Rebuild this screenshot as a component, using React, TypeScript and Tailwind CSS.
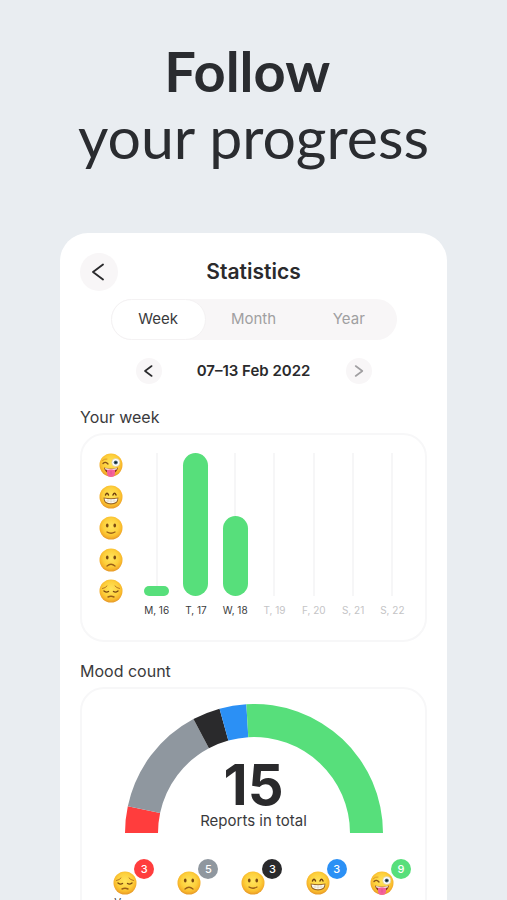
import { useState } from "react";

type Mood = "awful" | "bad" | "okay" | "good" | "great";

const moodScale: Mood[] = ["great", "good", "okay", "bad", "awful"];

const periods = ["Week", "Month", "Year"];

const days = [
    { label: "M, 16", value: 7 },
    { label: "T, 17", value: 100 },
    { label: "W, 18", value: 56 },
    { label: "T, 19", value: 0 },
    { label: "F, 20", value: 0 },
    { label: "S, 21", value: 0 },
    { label: "S, 22", value: 0 },
];

const moodCounts: { mood: Mood; label: string; count: number; badge: string }[] = [
    { mood: "awful", label: "Very bad", count: 3, badge: "bg-[#ff3d3d]" },
    { mood: "bad", label: "Bad", count: 5, badge: "bg-[#8f979f]" },
    { mood: "okay", label: "Okay", count: 3, badge: "bg-[#2a2a2c]" },
    { mood: "good", label: "Good", count: 3, badge: "bg-[#2b90f5]" },
    { mood: "great", label: "Great", count: 9, badge: "bg-[#57df7b]" },
];

// Angles in degrees, clockwise from the left end of the half circle
const gaugeSegments = [
    { from: 0, to: 12, color: "#ff3d3d" },
    { from: 12, to: 62, color: "#8f979f" },
    { from: 62, to: 74.5, color: "#2a2a2c" },
    { from: 74.5, to: 86.6, color: "#2b90f5" },
    { from: 86.6, to: 180, color: "#57df7b" },
];

function point(radius: number, angle: number) {
    const rad = (angle * Math.PI) / 180;
    return `${129 - radius * Math.cos(rad)} ${129 - radius * Math.sin(rad)}`;
}

function Chevron({ size, flip = false }: { size: number; flip?: boolean }) {
    return (
        <svg
            width={size}
            height={size}
            viewBox="0 0 18 18"
            fill="none"
            stroke="currentColor"
            strokeWidth={size > 14 ? 1.9 : 2.4}
            strokeLinecap="round"
            strokeLinejoin="round"
            aria-hidden="true"
        >
            <path d={flip ? "M4 1.500 14 9 4 16.500" : "M13 1.500 3 9l10 7.500"} />
        </svg>
    );
}

function MoodIcon({ mood }: { mood: Mood }) {
    return (
        <svg viewBox="0 0 48 48" className="size-6 shrink-0" role="img" aria-label={mood}>
            <defs>
                <radialGradient id="face" cx="50%" cy="42%" r="56%">
                    <stop offset="0" stopColor="#ffe45c" />
                    <stop offset="0.6" stopColor="#fdd03c" />
                    <stop offset="0.85" stopColor="#f8b72b" />
                    <stop offset="1" stopColor="#e89d2a" />
                </radialGradient>
            </defs>
            <circle cx="24" cy="24" r="23" fill="url(#face)" />
            {mood === "great" && (
                <>
                    <path d="M8 21q5-5 10 1" fill="none" stroke="#8a5418" strokeWidth="2.600" strokeLinecap="round" />
                    <path d="M7 15q4-4 9-3" fill="none" stroke="#d08c22" strokeWidth="1.600" strokeLinecap="round" />
                    <circle cx="33.500" cy="19" r="8" fill="#fff" stroke="#d6c6a0" strokeWidth="1.200" />
                    <circle cx="33.500" cy="19" r="4.200" fill="#4d7080" />
                    <circle cx="33.500" cy="19" r="2.200" fill="#101820" />
                    <path d="M10 29q14 5 28 0-2 12-14 12T10 29z" fill="#8a3a20" />
                    <path d="M12 30q12 4 24 0l-1 3q-11 3-22 0z" fill="#fff" />
                    <path d="M16 34q8-3 16 0v6q0 8-8 8t-8-8z" fill="#f4629b" />
                    <path d="M24 36v7" stroke="#d9508a" strokeWidth="1.500" />
                </>
            )}
            {mood === "good" && (
                <>
                    <path d="M13 20q3-7 6 0M28 20q3-7 6 0" fill="none" stroke="#70400f" strokeWidth="3" strokeLinecap="round" />
                    <path d="M9 25q15 3 30 0 0 14-15 14T9 25z" fill="#9a6424" />
                    <path d="M11 27q13 3 26 0-.5 9.500-13 9.500T11 27z" fill="#fffdf5" />
                    <path d="M12 31.500q12 2 24 0M18 28v7M24 28.500v8M30 28v7" fill="none" stroke="#cfc4ac" strokeWidth="1" />
                </>
            )}
            {mood === "okay" && (
                <>
                    <ellipse cx="16.500" cy="19" rx="2.600" ry="4" fill="#7a4912" />
                    <ellipse cx="31.500" cy="19" rx="2.600" ry="4" fill="#7a4912" />
                    <path d="M16 32q8 5 16 0" fill="none" stroke="#9a5f18" strokeWidth="2.600" strokeLinecap="round" />
                </>
            )}
            {mood === "bad" && (
                <>
                    <ellipse cx="16.500" cy="19" rx="2.600" ry="4" fill="#7a4912" />
                    <ellipse cx="31.500" cy="19" rx="2.600" ry="4" fill="#7a4912" />
                    <path d="M16 36q8-7 16 0" fill="none" stroke="#9a5f18" strokeWidth="2.600" strokeLinecap="round" />
                </>
            )}
            {mood === "awful" && (
                <>
                    <path d="M7 19q6-1 9-5M41 19q-6-1-9-5" fill="none" stroke="#b57420" strokeWidth="2" strokeLinecap="round" />
                    <path d="M10 24q5 4 9 1M38 24q-5 4-9 1" fill="none" stroke="#7a4912" strokeWidth="2.800" strokeLinecap="round" />
                    <path d="M18 36q6-3 12 0" fill="none" stroke="#9a5f18" strokeWidth="2.800" strokeLinecap="round" />
                </>
            )}
        </svg>
    );
}

function WeekChart() {
    return (
        <div className="flex rounded-3xl border-2 border-[#f7f7f8] pt-[18px] pr-[13px] pb-[22px] pl-[17px]">
            <div className="flex h-[150px] flex-col justify-between">
                {moodScale.map((mood) => (
                    <MoodIcon key={mood} mood={mood} />
                ))}
            </div>
            <div className="ml-3.5 grid flex-1 grid-cols-7">
                {days.map((day) => (
                    <div key={day.label} className="flex flex-col items-center">
                        <div className="relative flex h-[143px] w-full items-end justify-center">
                            <div className="absolute inset-y-0 left-1/2 w-0.5 -translate-x-1/2 bg-[#f6f6f7]" />
                            {day.value > 0 && (
                                <div
                                    className="relative w-[25px] rounded-full bg-[#57df7b]"
                                    style={{ height: `${day.value}%` }}
                                />
                            )}
                        </div>
                        <span
                            className={`mt-1.5 text-[10px] leading-4 whitespace-nowrap ${day.value > 0 ? "text-[#3a3a3c]" : "text-[#c4c4c6]"}`}
                        >
                            {day.label}
                        </span>
                    </div>
                ))}
            </div>
        </div>
    );
}

function MoodGauge() {
    return (
        <div className="relative mx-auto w-[258px]">
            <svg viewBox="0 0 258 129" className="w-full" aria-hidden="true">
                {gaugeSegments.map((segment) => (
                    <path
                        key={segment.color}
                        fill={segment.color}
                        d={`M${point(129, segment.from)}A129 129 0 0 1 ${point(129, segment.to)}L${point(96, segment.to)}A96 96 0 0 0 ${point(96, segment.from)}Z`}
                    />
                ))}
            </svg>
            <div className="absolute inset-x-0 bottom-0 text-center">
                <p className="text-[56px] leading-[52px] font-bold text-[#2a2a2c]">15</p>
                <p className="pb-0.5 text-[15px] leading-5 text-[#3a3a3c]">Reports in total</p>
            </div>
        </div>
    );
}

export default function App() {
    const [period, setPeriod] = useState("Week");

    return (
        <main className="flex h-screen flex-col overflow-hidden bg-[#e9edf1] px-[60px] font-['Inter',sans-serif]">
            <h1 className="pt-[38px] text-center font-['Lato',sans-serif] leading-[66px] whitespace-nowrap text-[#2a2c30]">
                <span className="block text-[56px] font-bold">Follow&nbsp;</span>
                <span className="block text-[59px]">your progress</span>
            </h1>

            <section className="mt-[63px] flex-1 rounded-t-[28px] bg-white px-5 pt-5">
                <header className="grid grid-cols-[38px_1fr_38px] items-center">
                    <button
                        aria-label="Back"
                        className="flex size-[38px] items-center justify-center rounded-full bg-[#f8f6f7] text-[#2a2a2c]"
                    >
                        <Chevron size={18} />
                    </button>
                    <h2 className="text-center text-[21px] leading-7 font-semibold text-[#2a2a2c]">Statistics</h2>
                </header>

                {/* Period switch */}
                <div className="mx-auto mt-2 grid h-[41px] w-[286px] grid-cols-3 rounded-full bg-[#f8f6f7]">
                    {periods.map((item) => (
                        <button
                            key={item}
                            onClick={() => setPeriod(item)}
                            className={`rounded-full text-[15px] ${period === item
                                ? "border border-[#f4f2f3] bg-white text-[#3a3a3c]"
                                : "text-[#a09fa1]"
                                }`}
                        >
                            {item}
                        </button>
                    ))}
                </div>

                <div className="mx-auto mt-[18px] flex w-[236px] items-center justify-between">
                    <button
                        aria-label="Previous week"
                        className="flex size-[26px] items-center justify-center rounded-full bg-[#f8f6f7] text-[#2a2a2c]"
                    >
                        <Chevron size={12} />
                    </button>
                    <span className="text-[15px] leading-6 font-semibold text-[#2a2a2c]">07–13 Feb 2022</span>
                    <button
                        aria-label="Next week"
                        className="flex size-[26px] items-center justify-center rounded-full bg-[#f8f6f7] text-[#a09fa1]"
                    >
                        <Chevron size={12} flip />
                    </button>
                </div>

                <h3 className="mt-[21px] mb-1 text-base leading-6 text-[#3a3a3c]">Your week</h3>
                <WeekChart />

                <h3 className="mt-[17px] mb-1 text-base leading-6 text-[#3a3a3c]">Mood count</h3>
                <div className="rounded-t-3xl border-2 border-[#f7f7f8] pt-[15px] pb-5">
                    <MoodGauge />
                    <ul className="mt-[26px] grid grid-cols-5 px-[11px]">
                        {moodCounts.map(({ mood, label, count, badge }) => (
                            <li key={mood} className="relative mx-auto flex w-6 flex-col items-center pt-3">
                                <MoodIcon mood={mood} />
                                <span
                                    className={`absolute top-0 left-[21px] flex size-5 items-center justify-center rounded-full text-[11px] font-medium text-white ${badge}`}
                                >
                                    {count}
                                </span>
                                <span className="mt-px flex h-6 items-center text-center text-[10px] leading-3 text-[#3a3a3c]">
                                    {label}
                                </span>
                            </li>
                        ))}
                    </ul>
                </div>
            </section>
        </main>
    );
}
